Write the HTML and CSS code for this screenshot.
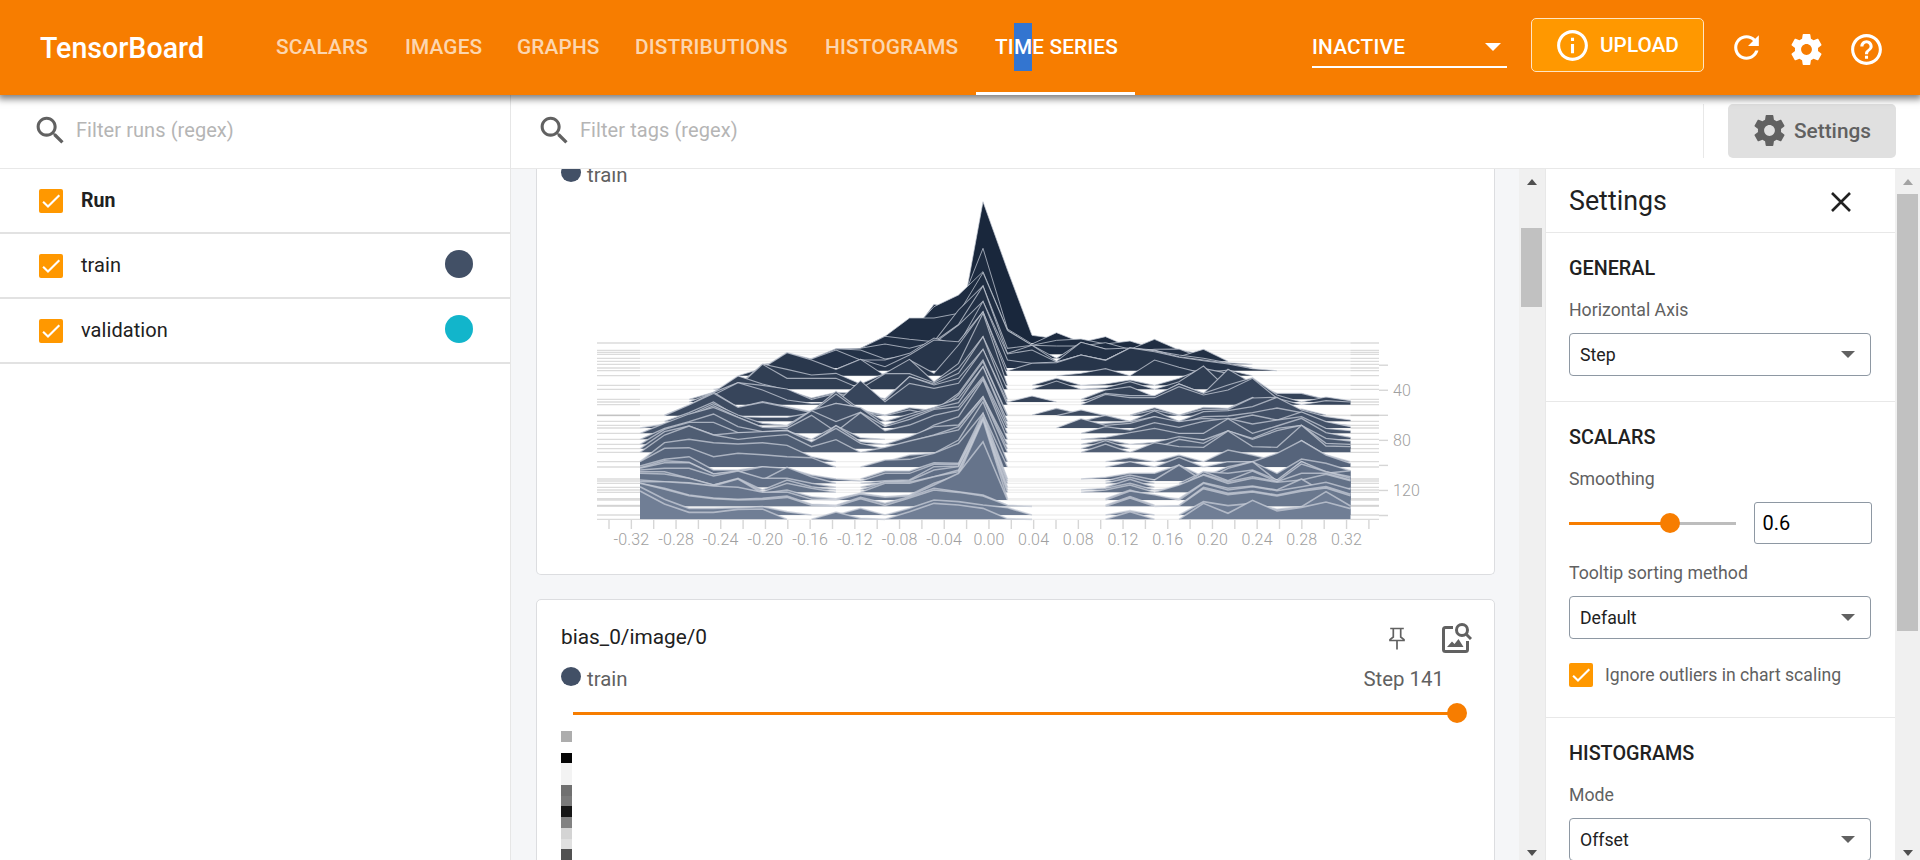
FILE: index.html
```html
<!DOCTYPE html>
<html lang="en">
<head>
<meta charset="utf-8">
<title>TensorBoard</title>
<link rel="stylesheet" href="styles.css">
</head>
<body>
<svg width="0" height="0" class="defs">
  <symbol id="gear" viewBox="0 0 24 24"><path d="M19.43 12.98c.04-.32.07-.64.07-.98s-.03-.66-.07-.98l2.11-1.65c.19-.15.24-.42.12-.64l-2-3.46c-.12-.22-.39-.3-.61-.22l-2.49 1c-.52-.4-1.08-.73-1.69-.98l-.38-2.65C14.46 2.18 14.25 2 14 2h-4c-.25 0-.46.18-.49.42l-.38 2.65c-.61.25-1.17.59-1.69.98l-2.49-1c-.23-.09-.49 0-.61.22l-2 3.46c-.13.22-.07.49.12.64l2.11 1.65c-.04.32-.07.65-.07.98s.03.66.07.98l-2.11 1.65c-.19.15-.24.42-.12.64l2 3.46c.12.22.39.3.61.22l2.49-1c.52.4 1.08.73 1.69.98l.38 2.65c.03.24.24.42.49.42h4c.25 0 .46-.18.49-.42l.38-2.65c.61-.25 1.17-.59 1.69-.98l2.49 1c.23.09.49 0 .61-.22l2-3.46c.12-.22.07-.49-.12-.64l-2.11-1.65zM12 15.5c-1.93 0-3.5-1.57-3.5-3.5s1.57-3.5 3.5-3.5 3.5 1.57 3.5 3.5-1.57 3.5-3.5 3.5z"/></symbol>
  <symbol id="search" viewBox="0 0 24 24"><path d="M15.5 14h-.79l-.28-.27C15.41 12.59 16 11.11 16 9.5 16 5.91 13.09 3 9.5 3S3 5.91 3 9.5 5.91 16 9.5 16c1.61 0 3.09-.59 4.23-1.57l.27.28v.79l5 4.99L20.49 19l-4.99-5zm-6 0C7.01 14 5 11.99 5 9.5S7.01 5 9.5 5 14 7.01 14 9.5 11.99 14 9.5 14z"/></symbol>
  <symbol id="check" viewBox="0 0 24 24"><path d="M4.1 12.7 9 17.6 20.3 6.3" fill="none" stroke="#fff" stroke-width="2.1"/></symbol>
</svg>
<header class="topbar">
  <h1 class="brand">TensorBoard</h1>
  <nav class="tabs">
    <a class="tab tab-scalars">SCALARS</a>
    <a class="tab tab-images">IMAGES</a>
    <a class="tab tab-graphs">GRAPHS</a>
    <a class="tab tab-dist">DISTRIBUTIONS</a>
    <a class="tab tab-hist">HISTOGRAMS</a>
    <a class="tab tab-time active">TI<span class="selected">M</span>E SERIES</a>
  </nav>
  <div class="inactive"><span>INACTIVE</span><i class="caret"></i></div>
  <button class="upload"><svg viewBox="0 0 24 24"><path d="M11 7h2v2h-2zm0 4h2v6h-2zm1-9C6.48 2 2 6.48 2 12s4.48 10 10 10 10-4.48 10-10S17.520 2 12 2zm0 18c-4.41 0-8-3.590-8-8s3.590-8 8-8 8 3.590 8 8-3.590 8-8 8z"/></svg><span>UPLOAD</span></button>
  <div class="actions">
    <svg class="refresh" viewBox="0 0 24 24"><path d="M17.650 6.350C16.200 4.900 14.210 4 12 4c-4.420 0-7.990 3.580-7.990 8s3.570 8 7.990 8c3.730 0 6.840-2.550 7.730-6h-2.080c-.82 2.330-3.040 4-5.650 4-3.310 0-6-2.690-6-6s2.690-6 6-6c1.660 0 3.140.69 4.220 1.780L13 11h7V4l-2.350 2.350z"/></svg>
    <svg><use href="#gear"/></svg>
    <svg viewBox="0 0 24 24"><path d="M11 18h2v-2h-2v2zm1-16C6.480 2 2 6.480 2 12s4.480 10 10 10 10-4.480 10-10S17.520 2 12 2zm0 18c-4.410 0-8-3.590-8-8s3.590-8 8-8 8 3.590 8 8-3.590 8-8 8zm0-14c-2.210 0-4 1.790-4 4h2c0-1.100.9-2 2-2s2 .9 2 2c0 2-3 1.750-3 5h2c0-2.250 3-2.500 3-5 0-2.210-1.790-4-4-4z"/></svg>
  </div>
</header>
<div class="page">
  <aside class="runs">
    <div class="filter"><svg><use href="#search"/></svg><span>Filter runs (regex)</span></div>
    <div class="run head"><span class="box"><svg><use href="#check"/></svg></span><span class="name">Run</span></div>
    <div class="run"><span class="box"><svg><use href="#check"/></svg></span><span class="name">train</span><i class="dot train"></i></div>
    <div class="run"><span class="box"><svg><use href="#check"/></svg></span><span class="name">validation</span><i class="dot validation"></i></div>
  </aside>
  <main class="main">
    <div class="filter tags"><svg><use href="#search"/></svg><span>Filter tags (regex)</span>
      <div class="settings-wrap"><button class="settings-btn"><svg><use href="#gear"/></svg><span>Settings</span></button></div>
    </div>
    <div class="content">
      <div class="cards">
        <section class="card hist-card">
          <div class="legend"><i></i><span>train</span></div>
          <svg class="chart" id="chart" viewBox="537 169 957 405" width="957" height="405"></svg>
        </section>
        <section class="card image-card">
          <div class="card-head"><span class="title">bias_0/image/0</span>
            <svg class="pin" viewBox="0 0 16 22"><path d="M1.200 1h13.600M4.300 1v8.500L1 12.200V13h14v-.8l-3.300-2.700V1M8 13v9" fill="none" stroke="#616161" stroke-width="1.700"/></svg>
            <svg class="imgsearch" viewBox="0 0 30 30"><path d="M11 4.500H3.500q-2 0-2 2v20q0 2 2 2h20q2 0 2-2V18" fill="none" stroke="#616161" stroke-width="3"/><circle cx="20" cy="7" r="5.500" fill="none" stroke="#616161" stroke-width="3"/><path d="m23.500 10.500 5.500 5.500" stroke="#616161" stroke-width="3"/><path d="m5 24 5-5.500 2.500 2.500 4-5L21.500 24z" fill="#616161"/></svg>
          </div>
          <div class="legend"><i></i><span>train</span><span class="step">Step 141</span></div>
          <div class="step-slider"><i></i></div>
          <div class="pixels"><i class="p1"></i><i class="p2"></i><i class="p3"></i><i class="p4"></i><i class="p5"></i><i class="p6"></i><i class="p7"></i><i class="p8"></i><i class="p9"></i><i class="p10"></i><i class="p11"></i></div>
        </section>
      </div>
      <div class="scrollbar"><i class="up"></i><i class="thumb"></i><i class="down"></i></div>
      <aside class="panel">
        <div class="panel-head"><span>Settings</span><svg viewBox="0 0 20 20"><path d="m1 1 18 18M19 1 1 19" stroke="#212121" stroke-width="2.600"/></svg></div>
        <section class="general">
          <h3>GENERAL</h3><label>Horizontal Axis</label>
          <div class="select"><span>Step</span><i class="caret"></i></div>
        </section>
        <section class="scalars">
          <h3>SCALARS</h3><label>Smoothing</label>
          <div class="smooth"><div class="slider"><i></i></div><div class="number">0.6</div></div>
          <label class="tooltip-label">Tooltip sorting method</label>
          <div class="select"><span>Default</span><i class="caret"></i></div>
          <div class="outliers"><span class="box"><svg><use href="#check"/></svg></span><span>Ignore outliers in chart scaling</span></div>
        </section>
        <section class="histograms">
          <h3>HISTOGRAMS</h3><label>Mode</label>
          <div class="select"><span>Offset</span><i class="caret"></i></div>
        </section>
      </aside>
      <div class="scrollbar outer"><i class="up"></i><i class="thumb"></i><i class="down"></i></div>
    </div>
  </main>
</div>
<script src="chart.js"></script>
</body>
</html>
```
FILE: styles.css
```css
* { box-sizing: border-box; }
body { margin: 0; height: 860px; overflow: hidden; font-family: Roboto, "Liberation Sans", sans-serif; color: #212121; background: #fff; font-size: 20px; }
.defs { position: absolute; }
svg { display: block; flex: none; }
i { display: block; flex: none; }
button { font-family: inherit; }
.topbar { height: 95px; background: #f77d00; color: #fff; display: flex; align-items: center; box-shadow: 0 2px 7px 2px rgba(0,0,0,.5); position: relative; z-index: 2; }
.brand { margin: 0; padding-left: 40px; width: 257px; font-size: 28.600px; font-weight: 500; flex: none; }
.tabs { display: flex; height: 95px; }
.tab { height: 95px; line-height: 94px; padding-left: 19px; font-weight: 500; font-size: 20.800px; letter-spacing: .15px; color: rgba(255,255,255,.7); white-space: nowrap; }
.tab-scalars { width: 129px; }
.tab-images { width: 112px; }
.tab-graphs { width: 118px; }
.tab-dist { width: 190px; }
.tab-hist { width: 170px; }
.tab-time { width: 159px; color: #fff; border-bottom: 3px solid #fff; }
.selected { background: #3375d0; padding: 12px 0; }
.inactive { margin-left: 177px; width: 195px; height: 41px; margin-top: 0; border-bottom: 2px solid #fff; display: flex; align-items: center; justify-content: space-between; padding: 0 6px 0 0; font-weight: 500; font-size: 20.800px; letter-spacing: .2px; }
.caret { border: 8px solid transparent; border-top: 8px solid; border-bottom: 0; width: 0; }
.upload { margin-left: 24px; margin-top: -5px; width: 173px; height: 54px; border: 1px solid #ffe5c4; border-radius: 5px; background: #ff9800; color: #fff; display: flex; align-items: center; padding: 0 0 0 22px; font-size: 20.800px; font-weight: 500; }
.upload svg { width: 37px; height: 37px; fill: #fff; margin-right: 9px; }
.actions { display: flex; align-items: center; gap: 23px; margin-left: 24px; }
.actions svg { width: 37px; height: 37px; fill: #fff; margin-top: 3px; }
.actions .refresh { margin-top: 0; }
.page { display: flex; height: 765px; }
.runs { width: 511px; border-right: 1px solid #e6e6e6; flex: none; }
.filter { height: 74px; border-bottom: 1px solid #e8e8e8; display: flex; align-items: center; color: #b5b5b5; padding-left: 32px; padding-bottom: 3px; letter-spacing: .07px; }
.filter svg { width: 37px; height: 37px; fill: #616161; margin-right: 7px; }
.run { height: 65px; border-bottom: 2px solid #e2e2e2; display: flex; align-items: center; padding-left: 39px; }
.run .name { margin-left: 18px; margin-top: -1px; letter-spacing: .07px; }
.head .name { font-weight: 700; font-size: 19.500px; }
.box { width: 24px; height: 24px; border-radius: 2px; background: #ff9800; display: block; flex: none; }
.box svg { width: 24px; height: 24px; }
.dot { width: 28px; height: 28px; border-radius: 50%; margin-left: auto; margin-right: 37px; margin-top: -3px; }
.train { background: #425066; }
.validation { background: #12b5cb; }
.main { flex: 1; display: flex; flex-direction: column; min-width: 0; }
.filter.tags { padding-left: 25px; flex: none; }
.settings-wrap { margin-left: auto; margin-right: 24px; margin-top: 1px; height: 54px; border-left: 1px solid #e8e8e8; padding-left: 24px; }
.settings-btn { width: 168px; height: 54px; border: 0; border-radius: 5px; background: #e0e0e0; color: #616161; display: flex; align-items: center; padding: 0 0 0 23px; font-size: 20.800px; font-weight: 500; }
.settings-btn svg { margin-right: 6px; }
.content { display: flex; height: 691px; overflow: hidden; background: #f5f6f8; }
.cards { width: 1008px; padding: 0 24px 0 25px; flex: none; }
.card { width: 959px; border: 1px solid #dcdde0; background: #fff; border-radius: 5px; }
.hist-card { height: 406px; border-top: 0; border-radius: 0 0 5px 5px; margin-bottom: 24px; overflow: hidden; }
.chart { margin-top: -19px; }
.legend { display: flex; align-items: flex-start; padding-left: 24px; height: 28px; color: #616161; line-height: 30px; font-size: 20.400px; }
.legend i { width: 20px; height: 19px; border-radius: 50%; background: #425066; margin: 3px 6px 0 0; }
.hist-card .legend { margin-top: -9px; }
.image-card { height: 300px; }
.card-head { display: flex; align-items: flex-start; padding: 22px 22px 0 24px; height: 64px; }
.title { line-height: 30px; margin-right: auto; font-size: 20.800px; }
.pin { width: 16px; height: 23px; margin-top: 5px; }
.imgsearch { width: 30px; height: 30px; margin: 1px 0 0 37px; }
.step { margin-left: auto; margin-right: 50px; }
.step-slider { margin: 20px 37px 0 36px; height: 3px; background: #f77d00; position: relative; }
.step-slider i { width: 20px; height: 20px; border-radius: 50%; background: #f77d00; position: absolute; right: -10px; top: -9px; }
.pixels { margin: 16px 0 0 24px; width: 11px; }
.pixels i { height: 11px; }
.p1 { background: #adadad; }
.pixels .p3 { height: 10px; background: #050505; }
.pixels .p4 { height: 22px; background: #f3f3f3; }
.p5 { background: #707070; }
.pixels .p6 { height: 10px; background: #7a7a7a; }
.p7 { background: #161616; }
.p8 { background: #828282; }
.p9 { background: #d4d4d4; }
.pixels .p10 { height: 10px; background: #e0e0e0; }
.p11 { background: #515151; }
.scrollbar { width: 26px; background: #f0f0f0; display: flex; flex-direction: column; align-items: center; padding: 10px 1px 4px 0; flex: none; }
.up { border: 5px solid transparent; border-bottom: 6px solid #505050; border-top: 0; }
.down { border: 5px solid transparent; border-top: 6px solid #505050; border-bottom: 0; margin-top: auto; }
.thumb { width: 21px; height: 79px; margin-top: 43px; background: #c1c1c1; }
.outer { width: 25px; padding-right: 0; }
.outer .thumb { height: 437px; margin-top: 9px; }
.outer .up { border-bottom-color: #a3a3a3; }
.panel { width: 350px; border-left: 1px solid #e8e8e8; background: #fff; flex: none; overflow: hidden; }
.panel-head { height: 64px; border-bottom: 1px solid #e8e8e8; display: flex; justify-content: space-between; align-items: center; padding: 0 44px 0 23px; font-size: 26.800px; }
.panel-head svg { width: 20px; height: 20px; margin-top: 3px; }
.panel section { padding: 23px 23px 0; border-bottom: 1px solid #e8e8e8; }
.general { height: 169px; }
.scalars { height: 316px; }
.histograms { height: 240px; }
.panel h3 { margin: 0; line-height: 26px; font-size: 19.800px; font-weight: 500; }
.panel label { display: block; margin-top: 16px; line-height: 24px; font-size: 17.700px; color: #616161; }
.select { margin-top: 11px; width: 302px; height: 43px; border: 1px solid #8e98a3; border-radius: 4px; display: flex; justify-content: space-between; align-items: center; padding: 0 15px 0 10px; font-size: 17.700px; }
.select .caret { border-width: 7px 7px 0; border-top-color: #616161; }
.smooth { display: flex; align-items: center; margin-top: 11px; height: 42px; }
.slider { width: 168px; height: 3px; background: linear-gradient(to right, #f77d00 60%, #bdbdbd 60%); position: relative; }
.slider i { width: 20px; height: 20px; border-radius: 50%; background: #f77d00; position: absolute; left: 91px; top: -9px; }
.number { margin-left: 18px; width: 118px; height: 42px; border: 1px solid #8e98a3; border-radius: 3px; color: #000; line-height: 41px; padding-left: 7px; font-size: 20px; }
.panel .tooltip-label { margin-top: 17px; }
.outliers { display: flex; align-items: center; margin-top: 24px; font-size: 17.600px; color: #616161; gap: 12px; white-space: nowrap; }
.baseline-out { stroke: rgba(0,0,0,.14); stroke-width: 1.300; }
.baseline-in { stroke: rgba(0,0,0,.065); stroke-width: 1.300; }
.tick { stroke: #d6d6d6; stroke-width: 1.400; }
.axis-text { font-size: 16px; fill: #a0a0a0; font-weight: 300; letter-spacing: .15px; }
```
FILE: chart.js
```js
// Each row: baseline followed by "bin:y" pairs; y is in thirds of a pixel.
const rows = `
549|13:526 14:125 15:330 16:526 17:536
571|11:530 12:433 13:450 14:265 15:507 16:552 17:518 18:547 19:530 20:562
577|10:560 11:520 12:440 13:405 14:335 15:510 16:556 17:541 18:537 19:552 20:543 21:566
583|9:565 10:529 11:474 12:474 13:460 14:338 15:512 16:556 17:558 18:558 19:548 20:568 21:538 22:570
595|8:590 9:565 10:529 11:538 12:545 13:450 14:378 15:565 16:556 17:605 18:547 19:567 20:575 21:568 22:567
604|7:598 8:566 9:565 10:552 11:565 12:545 13:493 14:378 15:580 16:556 17:606 18:547 19:567 20:564 21:570 22:590 23:568 24:604
613|6:605 7:596 8:566 9:570 10:597 11:585 12:550 13:495 14:424 15:582 16:570 17:606 18:585 19:600 20:564 21:572 22:585 23:595 24:608
624|6:578 7:597 8:570 9:600 10:600 11:580 12:534 13:555 14:424 15:600 16:610 17:606 18:585 19:601 20:564 21:572 22:590 23:600 24:610
632|6:620 7:625 8:628 9:598 10:620 11:585 12:540 13:545 14:455 15:632 16:610 17:608 18:585 19:601 20:564 21:575 22:592 23:602 24:612 25:626
647|5:625 6:578 7:600 8:628 9:598 10:647 11:600 12:640 13:555 14:455 18:640 19:626 20:647 21:600 22:622 23:640 24:630
676|5:612 6:628 7:645 8:640 9:672 10:640 11:598 12:665 13:610 14:460 17:655 19:672 20:660 22:655 23:625 24:640 25:676
688|4:680 5:613 6:655 7:655 8:655 9:686 10:641 11:641 12:668 13:625 14:530 17:663 19:683 20:665 22:665 23:618 24:688
718|3:697 4:648 5:672 6:690 7:714 8:697 9:700 10:716 11:650 12:672 13:640 14:530 19:690 20:680 21:710 22:672 23:700 24:628 25:670 26:700 27:700
726|3:697 4:668 5:676 6:687 7:718 8:700 9:715 10:720 11:650 12:675 13:655 14:568 16:708 19:700 20:707 21:707 22:672 23:700 24:675 25:653 26:705 28:711 29:722
734|3:705 4:668 5:690 6:720 7:730 8:728 9:662 10:725 11:670 12:685 13:670 14:568 19:703 20:713 21:713 22:680 23:705 24:690 25:655 26:715 28:722 29:726
765|2:735 3:697 4:742 5:725 6:740 7:755 8:694 9:750 10:765 11:743 12:752 13:700 14:600 17:745 18:762 19:765 21:743 23:742 24:745 25:712 26:760 27:747
767|2:735 3:700 4:742 5:727 6:742 7:758 8:702 9:755 10:767 11:750 12:765 13:705 14:605 18:750 21:750 23:748 24:748 25:714 26:712 27:767
784|2:758 3:726 4:770 5:772 6:772 7:758 8:730 9:743 10:784 11:762 12:742 13:715 14:620 19:766 20:784 21:753 23:755 24:752 25:740 26:712 27:750 28:770 29:780
796|1:796 2:765 3:731 4:765 5:790 6:796 7:751 8:730 9:743 10:796 11:770 12:745 13:728 14:620 19:790 20:785 21:770 22:790 23:770 24:768 25:758 26:744 27:758 28:790 29:796
804|1:792 2:770 3:737 4:772 5:802 6:800 7:752 8:785 9:757 10:800 11:778 12:748 13:740 14:650 18:776 19:796 20:790 21:770 22:785 23:775 24:780 25:765 26:780 27:756 28:785 29:800
820|1:790 2:762 3:742 4:772 5:802 6:805 7:766 8:815 9:758 10:812 11:795 12:766 13:750 14:655 19:800 20:810 21:788 22:802 23:784 24:775 25:792 26:780 27:770 28:805 29:812
838|1:805 2:785 3:762 4:800 5:815 6:812 7:838 8:797 9:833 11:838 12:795 13:770 14:660 19:832 20:818 21:805 22:820 23:820 24:776 25:820 26:798 27:775 28:818 29:832
853|1:808 2:787 3:787 4:818 5:818 6:810 7:853 8:797 9:845 11:830 12:800 13:795 14:710 19:838 20:853 21:847 22:830 23:840 24:813 25:835 26:805 27:796 28:835 29:843
866|1:815 2:798 3:825 4:818 5:815 6:812 7:845 8:805 9:850 11:845 12:825 13:800 14:710 19:842 22:838 23:850 24:812 25:838 26:812 27:796 28:850 29:853
877|1:825 2:798 3:825 4:838 5:830 6:824 7:860 8:839 9:877 10:862 11:843 12:826 13:810 14:715 19:852 20:877 21:848 22:860 23:862 24:813 25:860 26:862 27:796 28:858 29:860
905|0:905 1:848 2:838 3:848 4:852 5:848 6:856 7:890 8:905 11:885 12:880 13:840 14:725 20:893 22:885 23:905 24:870 25:885 26:903 27:842 28:885 29:908
921|0:905 1:865 2:863 3:890 4:880 5:884 6:890 7:893 8:921 10:900 11:898 12:880 13:850 14:760 20:905 22:892 23:921 24:905 25:905 26:880 27:842 28:885 29:910
957|0:918 1:898 2:890 3:930 4:930 5:920 6:930 7:950 8:957 10:933 11:933 12:908 13:910 14:760 19:952 20:940 21:940 22:915 23:950 24:920 25:905 26:940 27:897 28:910 29:932
963|0:923 1:902 2:907 3:942 4:935 5:920 6:925 7:945 8:957 10:940 11:940 12:913 13:913 14:770 20:945 21:960 22:915 23:963 24:925 25:905 26:963 27:905 28:940 29:932
970|0:925 1:908 2:908 3:942 4:932 5:960 6:922 7:950 10:962 11:960 12:920 13:918 14:775 20:952 22:970 23:935 24:940 25:930 26:960 27:905 28:935 29:950
982|0:930 1:925 2:925 3:948 4:933 5:955 6:955 7:970 10:965 11:962 12:930 13:920 14:780 20:958 22:982 23:935 24:962 25:933 26:965 27:912 28:935 29:955
990|0:935 1:935 2:955 3:975 4:955 5:990 6:960 7:980 10:965 11:966 12:950 13:930 14:782 19:985 20:970 22:985 23:943 24:965 25:950 26:965 27:940 28:940 29:960
997|0:940 1:942 2:955 3:975 4:957 5:995 6:970 7:985 10:970 11:970 12:950 13:935 14:785 19:990 20:975 22:975 23:945 24:970 25:955 26:967 27:960 28:943 29:962
1016|0:960 1:965 2:968 3:978 4:957 5:1000 6:990 7:1010 9:1000 10:1010 11:1005 12:970 13:945 14:780 20:990 21:1010 22:1016 23:968 24:985 25:978 26:990 27:957 28:1000 29:985
1020|0:965 1:965 2:970 3:978 4:982 5:997 6:996 7:1018 9:1002 10:1012 11:1008 12:975 13:940 14:845 20:993 21:1004 22:1020 23:970 24:990 25:980 26:992 27:980 28:967 29:988
1036|0:970 1:985 2:1005 3:1014 4:1018 5:1015 6:1008 7:1033 9:1012 10:1030 11:1010 12:985 13:995 14:1005 20:1010 22:1036 23:982 24:1000 25:993 26:1005 27:990 28:980 29:1003
1039|0:970 1:988 2:1007 3:1016 4:1020 5:1018 6:1012 7:1036 9:1016 10:1036 11:1014 12:990 13:997 14:1008 15:1036 20:1014 22:1037 23:986 24:1004 25:996 26:1008 27:994 28:984 29:1007
1065|0:980 1:1018 2:1045 3:1045 4:1043 5:1040 6:1055 7:1065 9:1045 10:1065 11:1045 12:1020 13:1025 14:1035 15:1043 20:1052 22:1065 23:1025 24:1037 25:1030 26:1048 27:1040 28:995 29:1038
1078|0:993 1:1032 2:1057 3:1057 4:1048 5:1047 6:1078 8:1056 9:1075 11:1055 12:1030 13:1035 14:1045 15:1076 20:1055 23:1030 24:1060 25:1021 26:1053 27:1042 28:1026 29:1046`.trim().split("\n");

const xOf = k => 640 + 24.5 * k;
const from = [25, 39, 60], to = [112, 126, 149];
let out = "";
const parsed = rows.map(r => {
  const [b, pts] = r.split("|");
  const base = +b, ys = Array(30).fill(base);
  pts.split(" ").forEach(p => { const [k, y] = p.split(":"); ys[k] = Math.min(base, +y); });
  return { base, ys };
});
parsed.forEach(({ base }) => {
  const y = 160 + base / 3;
  out += `<path class="baseline-out" d="M597 ${y}H640M1350.5 ${y}H1379"/><path class="baseline-in" d="M640 ${y}H1350.500"/>`;
});
parsed.forEach(({ base, ys }) => {
  const t = (base - 549) / 529, c = from.map((v, n) => Math.round(v + (to[n] - v) * t));
  const B = 160 + base / 3;
  // Split into runs of non-empty bins so that empty stretches stay clear.
  let k = 0;
  while (k < 30) {
    if (ys[k] >= base) { k++; continue; }
    let s = k, e = k;
    while (e < 29 && ys[e + 1] < base) e++;
    const pts = [];
    if (s > 0) pts.push([xOf(s - 1), B]);
    for (let n = s; n <= e; n++) pts.push([xOf(n), 160 + ys[n] / 3]);
    if (e < 29) pts.push([xOf(e + 1), B]);
    const d = "M" + pts.map(p => p[0] + " " + p[1].toFixed(2)).join("L");
    out += `<path d="${d}L${pts[pts.length - 1][0]} ${B}L${pts[0][0]} ${B}Z" fill="rgb(${c})"/>`;
    out += `<path d="${d}" fill="none" stroke="rgba(200,206,216,.75)" stroke-width="${(0.95 + t * 0.7).toFixed(2)}"/>`;
    k = e + 1;
  }
});
for (let n = 0; n < 35; n++) {
  const x = 609 + 22.35 * n;
  out += `<path class="tick" d="M${x} 520V529"/>`;
  if (n % 2) out += `<text class="axis-text" x="${x}" y="545" text-anchor="middle">${((n - 17) * 0.02).toFixed(2)}</text>`;
}
for (let n = 0; n < 7; n++) out += `<path class="tick" d="M1379 ${365.2 + 25.050 * n}H1388"/>`;
[40, 80, 120].forEach((v, n) => out += `<text class="axis-text" x="1393" y="${396 + 50.1 * n}">${v}</text>`);
document.getElementById("chart").innerHTML = out;
```
